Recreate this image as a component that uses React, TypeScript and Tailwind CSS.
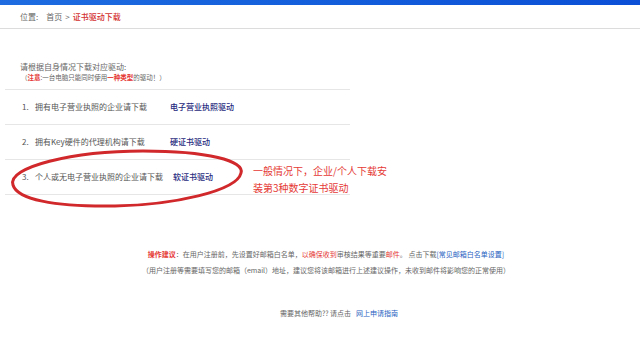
import React from "react";

const font = { fontFamily: '"Noto Sans CJK SC", "Noto Sans", sans-serif' };

const rows = [
  { n: "1.", text: "拥有电子营业执照的企业请下载", link: "电子营业执照驱动", w: "w-[135px]" },
  { n: "2.", text: "拥有Key硬件的代理机构请下载", link: "硬证书驱动", w: "w-[135px]" },
  { n: "3.", text: "个人或无电子营业执照的企业请下载", link: "软证书驱动", w: "w-[138px]" },
];

export default function App() {
  return (
    <div className="w-[640px] h-[363px] bg-white overflow-hidden" style={font}>
      {/* top bar */}
      <div className="h-[5px] bg-gradient-to-r from-[#1e6ce0] to-[#0b4fd6]" />

      {/* breadcrumb */}
      <div className="h-[24px] flex items-center pl-[20px] border-b border-[#dcdcdc] text-[8px] text-[#666]">
        <span>位置:</span>
        <span className="ml-[8px]">首页</span>
        <span className="ml-[3px]">&gt;</span>
        <span className="ml-[3px] text-[#d32f2f] font-medium">证书驱动下载</span>
      </div>

      {/* content */}
      <div className="pt-[32px]">
        <div className="pl-[20px] text-[8px] leading-[11px] text-[#666]">请根据自身情况下载对应驱动:</div>
        <div className="pl-[21px] text-[6.5px] leading-[11px] text-[#666]">
          （<span className="text-[#e53935] font-bold">注意</span>:一台电脑只能同时使用
          <span className="text-[#e53935] font-bold">一种类型</span>的驱动！）
        </div>

        <div className="relative ml-[5px] w-[345px] mt-[6px] border-t border-[#e6e6e6]">
          {rows.map((r) => (
            <div
              key={r.n}
              className="h-[35px] flex items-center border-b border-[#e6e6e6] pl-[17px] text-[8px] text-[#555]"
            >
              <span className="w-[13px]">{r.n}</span>
              <span className={r.w}>{r.text}</span>
              <span className="text-[#1f2a80] font-medium">{r.link}</span>
            </div>
          ))}

          {/* annotation */}
          <div className="absolute left-[248px] top-[72px] w-[150px] text-[10px] leading-[17px] text-[#e53935]">
            一般情况下，企业/个人下载安
            <br />
            装第3种数字证书驱动
          </div>
          <svg
            className="absolute left-[-2px] top-[55px]"
            width="245"
            height="66"
            viewBox="0 0 245 66"
          >
            <path
              d="M10 40 C 4 22, 70 6, 140 6 C 205 6, 242 16, 238 28 C 234 46, 170 60, 112 61 C 50 62, 14 54, 10 40 Z"
              fill="none"
              stroke="#d0282b"
              strokeWidth="3"
              strokeLinecap="round"
            />
          </svg>
        </div>

        {/* tips */}
        <div className="mt-[51px] pl-[12px] flex flex-col items-center text-[7px] leading-[16px] text-[#666]">
          <div>
            <span className="text-[#e53935] font-bold">操作建议</span>：在用户注册前，先设置好邮箱白名单，
            <span className="text-[#e53935]">以确保收到</span>审核结果等重要
            <span className="text-[#e53935]">邮件</span>。 点击下载
            <span className="text-[#1f5fbf]">[常见邮箱白名单设置]</span>
          </div>
          <div>（用户注册等需要填写您的邮箱（email）地址，建议您将该邮箱进行上述建议操作，未收到邮件将影响您的正常使用）</div>
        </div>

        <div className="mt-[30px] pl-[38px] flex justify-center text-[7px] text-[#666]">
          <span>需要其他帮助?? 请点击</span>
          <span className="ml-[5px] text-[#1f5fbf]">网上申请指南</span>
        </div>
      </div>
    </div>
  );
}
